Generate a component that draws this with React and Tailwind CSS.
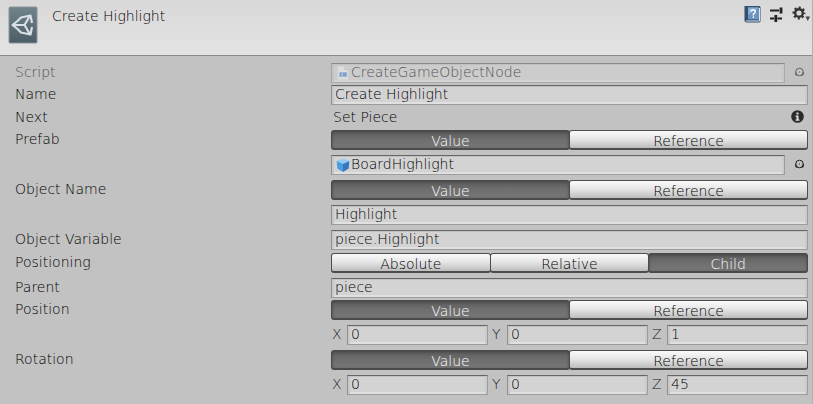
import React from "react";

const bevel =
  "h-5 border border-t-[#666] border-l-[#8f8f8f] border-r-[#9c9c9c] border-b-[#9c9c9c] bg-[#d3d3d3] shadow-[inset_2px_0_0_#c8c8c8,inset_-2px_0_0_#cbcbcb,inset_0_-2px_0_#e0e0e0,inset_0_1px_0_#c0c0c0]";

function Row({ label, htmlFor, className = "", children }) {
  return (
    <div className={`flex items-start ${className}`}>
      <label htmlFor={htmlFor} className="w-[316px] shrink-0 leading-[18px]">
        {label}
      </label>
      <div className="flex min-w-0 flex-1 flex-col gap-[5px]">{children}</div>
    </div>
  );
}

function TextField({ id, value, label }) {
  return (
    <input
      id={id}
      aria-label={label}
      defaultValue={value}
      className={`${bevel} w-full min-w-0 pb-[2px] pl-[3px] outline-none`}
    />
  );
}

function Segments({ label, options, active }) {
  return (
    <div role="group" aria-label={label} className="flex h-5">
      {options.map((name) => (
        <button
          key={name}
          type="button"
          aria-pressed={name === active}
          className={`-ml-px flex-1 basis-0 rounded-[3px] border border-b-2 pt-px leading-[19px] first:ml-0 ${
            name === active
              ? "border-[#4a4a4a] bg-linear-to-b from-[#5c5c5c] via-[#6e6e6e] to-[#777] text-white shadow-[inset_0_1px_3px_#444]"
              : "border-[#4c4c4c] bg-linear-to-b from-[#fbfbfb] via-[#e4e4e4] to-[#bdbdbd] text-black"
          }`}
        >
          {name}
        </button>
      ))}
    </div>
  );
}

function Picker({ label }) {
  return (
    <button type="button" aria-label={label} className="flex h-5 w-[23px] items-start justify-end pt-1 pr-[3px]">
      <svg width="11" height="11" viewBox="0 0 11 11" fill="none" stroke="#222">
        <circle cx="5.500" cy="5" r="3.800" strokeWidth="1" />
        <path d="M1.800 5v3h2M9.200 5v3h-2" strokeWidth="1" />
        <path d="M5 5h1" />
      </svg>
    </button>
  );
}

function ObjectField({ id, value, icon, disabled, label }) {
  return (
    <div className={`flex ${disabled ? "opacity-60" : ""}`}>
      <div className={`${bevel} flex min-w-0 flex-1 items-center pl-1`}>
        {icon}
        <input
          id={id}
          aria-label={label}
          defaultValue={value}
          disabled={disabled}
          readOnly
          className="h-[18px] min-w-0 flex-1 pb-[2px] pl-px outline-none"
        />
      </div>
      <Picker label={`Select ${value}`} />
    </div>
  );
}

function Vector({ name, values }) {
  return (
    <div className="flex gap-[3px]">
      {["X", "Y", "Z"].map((axis, i) => (
        <div key={axis} className="flex min-w-0 flex-1">
          <label htmlFor={`${name}-${axis}`} className="w-4 shrink-0 pl-px leading-[18px] text-[#222]">
            {axis}
          </label>
          <TextField id={`${name}-${axis}`} value={values[i]} />
        </div>
      ))}
    </div>
  );
}

function ScriptIcon() {
  return (
    <svg width="14" height="16" viewBox="0 0 14 16" className="shrink-0">
      <path d="M2 1.500h7l3 3v10H2z" fill="#f0f2f4" stroke="#dde2e8" />
      <path d="M9 1.500v3h3" fill="none" stroke="#b9c0c8" />
      <rect x="3" y="7" width="8" height="5" fill="#9dbdea" />
      <path d="M6 8H4.500v3H6M7.500 8h2.500v3H7.500zM7 9.500h3" fill="none" stroke="#4a83d4" strokeWidth="1" />
    </svg>
  );
}

function CubeIcon() {
  return (
    <svg width="14" height="16" viewBox="0 0 14 16" className="shrink-0">
      <path d="M7 1.500L13.300 4 7 7 .700 4z" fill="#92cdf5" />
      <path d="M.700 4L7 7v8L1.300 11.500z" fill="#4c9bdf" />
      <path d="M13.300 4L7 7v8l5.700-3.500z" fill="#3478bd" />
    </svg>
  );
}

function UnityIcon() {
  return (
    <svg width="30" height="38" viewBox="0 0 30 38" className="shrink-0">
      <defs>
        <linearGradient id="slate" x1="0" y1="0" x2="0" y2="1">
          <stop offset="0" stopColor="#71848c" />
          <stop offset="1" stopColor="#4b5c65" />
        </linearGradient>
      </defs>
      <rect x="1" y="1" width="28" height="36" rx="1" fill="url(#slate)" stroke="#88949a" />
      <path
        d="M9.500 15L13 11.500 22.500 9.500 24 17M24 21L22.500 28.500 13 26.500 9.500 23M9.500 15L4.500 19 9.500 23M5 19H16.500M16.500 19L21.500 10.500M16.500 19L21.500 27.500"
        fill="none"
        stroke="#d8e0e3"
        strokeWidth="2.200"
        strokeLinejoin="round"
      />
    </svg>
  );
}

function Tools() {
  return (
    <div className="flex gap-2 pr-[2px]">
      <button type="button" aria-label="Help">
        <svg width="17" height="18" viewBox="0 0 17 18">
          <path d="M.500 0h15l1 1v14.500l-1 1H2L.500 15z" fill="#33506f" />
          <path d="M4 1.500h11v12H4z" fill="#6c93bf" />
          <path d="M4 1.500h11L4 9z" fill="#8baed3" />
          <path d="M2 15h13.500V2" fill="none" stroke="#dfe6ee" />
          <path d="M7 5.500q0-1.500 2.200-1.500t2.200 1.600q0 1.200-2 2.400v1.500M9.400 10.500v1.500" fill="none" stroke="#fff" strokeWidth="1.400" />
        </svg>
      </button>
      <button type="button" aria-label="Presets">
        <svg width="15" height="18" viewBox="0 0 15 18" fill="none" stroke="#222" strokeWidth="2">
          <path d="M1 4.500h9M1 12.500h4M8.500 12.500H13" strokeWidth="2.200" />
          <path d="M12 1.500v6M6.800 9v7" strokeWidth="2.800" />
        </svg>
      </button>
      <button type="button" aria-label="Settings">
        <svg width="18" height="18" viewBox="0 0 18 18">
          <circle cx="7" cy="7" r="3.800" fill="none" stroke="#333" strokeWidth="2.400" />
          <circle cx="7" cy="7" r="5.500" fill="none" stroke="#333" strokeWidth="2" strokeDasharray="2.200 2.120" strokeDashoffset="1.100" />
          <path d="M13.500 10.500h4.500l-2.200 4.500z" fill="#444" />
        </svg>
      </button>
    </div>
  );
}

export default function App() {
  return (
    <main className="min-h-screen border-r border-[#b0b0b0] bg-[#c2c2c2] font-['DejaVu_Sans','Noto_Sans',sans-serif] text-[14px] font-extralight text-black">
      <header className="flex h-14 items-start border-b border-[#8a8a8a] bg-linear-to-b from-[#d8d8d8] to-[#e3e3e3] pt-[6px] pl-2">
        <UnityIcon />
        <h1 className="flex-1 pl-[14px] leading-5">Create Highlight</h1>
        <Tools />
      </header>
      <div className="flex flex-col pt-[7px] pr-1 pb-2 pl-[15px]">
        <Row label={<span className="opacity-60">Script</span>} htmlFor="script">
          <ObjectField id="script" value="CreateGameObjectNode" icon={<ScriptIcon />} disabled />
        </Row>
        <Row label="Name" htmlFor="name" className="mt-[2px]">
          <TextField id="name" value="Create Highlight" />
        </Row>
        <Row label="Next" className="mt-[3px]">
          <div className="flex h-5 items-start justify-between pr-1 pl-[2px]">
            <span className="leading-[18px]">Set Piece</span>
            <svg width="13" height="18" viewBox="0 0 13 18">
              <circle cx="6.500" cy="8.500" r="6.300" fill="#2b2b2b" />
              <path d="M5.500 4.500h2v2h-2zM4.500 7.500h3v4h1v1.200h-4V11.500h1V8.700h-1z" fill="#e0e0e0" />
            </svg>
          </div>
        </Row>
        <Row label="Prefab" htmlFor="prefab" className="mt-[2px]">
          <Segments label="Prefab source" options={["Value", "Reference"]} active="Value" />
          <ObjectField id="prefab" value="BoardHighlight" icon={<CubeIcon />} />
        </Row>
        <Row label="Object Name" htmlFor="object-name" className="mt-[5px]">
          <Segments label="Object name source" options={["Value", "Reference"]} active="Value" />
          <TextField id="object-name" value="Highlight" />
        </Row>
        <Row label="Object Variable" htmlFor="object-variable" className="mt-[5px]">
          <TextField id="object-variable" value="piece.Highlight" />
        </Row>
        <Row label="Positioning" className="mt-[3px]">
          <Segments label="Positioning" options={["Absolute", "Relative", "Child"]} active="Child" />
        </Row>
        <Row label="Parent" htmlFor="parent" className="mt-[5px]">
          <TextField id="parent" value="piece" />
        </Row>
        <Row label="Position" htmlFor="position-X" className="mt-[2px]">
          <Segments label="Position source" options={["Value", "Reference"]} active="Value" />
          <Vector name="position" values={["0", "0", "1"]} />
        </Row>
        <Row label="Rotation" htmlFor="rotation-X" className="mt-[5px]">
          <Segments label="Rotation source" options={["Value", "Reference"]} active="Value" />
          <Vector name="rotation" values={["0", "0", "45"]} />
        </Row>
      </div>
    </main>
  );
}
